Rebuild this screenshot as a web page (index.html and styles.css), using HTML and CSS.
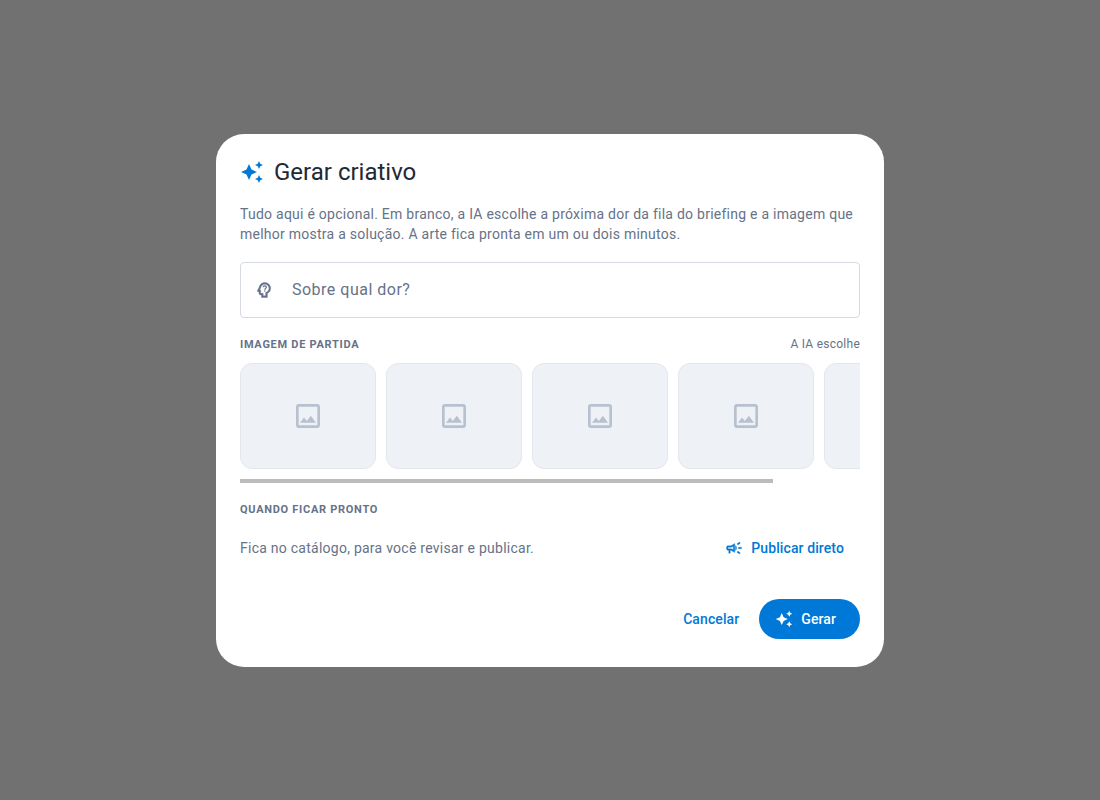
FILE: index.html
```
<!DOCTYPE html>
<html lang="pt-BR">
<head>
<meta charset="utf-8">
<meta name="viewport" content="width=device-width, initial-scale=1">
<title>Gerar criativo</title>
<link rel="stylesheet" href="styles.css">
</head>
<body>
<svg class="sprite" aria-hidden="true">
  <symbol id="sparkle" viewBox="0 0 24 24"><path d="M19 9l1.25-2.75L23 5l-2.75-1.25L19 1l-1.25 2.75L15 5l2.75 1.25zM11.5 9.5L9 4 6.5 9.5 1 12l5.5 2.5L9 20l2.5-5.5L17 12zM19 15l-1.25 2.75L15 19l2.75 1.25L19 23l1.25-2.75L23 19l-2.75-1.25z"/></symbol>
  <symbol id="image" viewBox="0 0 24 24"><path d="M19 5v14H5V5h14m0-2H5c-1.1 0-2 .9-2 2v14c0 1.1.9 2 2 2h14c1.1 0 2-.9 2-2V5c0-1.1-.9-2-2-2zm-4.86 8.86l-3 3.87L9 13.14 6 17h12z"/></symbol>
  <symbol id="mind" viewBox="0 0 24 24"><path d="M19.94 9.06c-.43-3.27-3.23-5.86-6.53-6.05C13.27 3 13.14 3 13 3 9.47 3 6.57 5.61 6.08 9l-1.93 3.48C3.74 13.14 4.22 14 5 14h1v2c0 1.1.9 2 2 2h1v3h7v-4.68c2.62-1.25 4.35-4.08 3.94-7.26zM14.89 14.63L14 15.05V19h-3v-3H8v-4H6.7l1.33-2.33C8.21 7.06 10.35 5 13 5c2.76 0 5 2.24 5 5 0 2.09-1.29 3.88-3.11 4.63z" stroke="currentColor" stroke-width=".5"/><path d="M11.1 8.6c.2-2.3 3.7-2.2 3.7 0 0 1.4-1.8 1.5-1.8 3" fill="none" stroke="currentColor" stroke-width="1.5"/><circle cx="13" cy="13.2" r=".9"/></symbol>
  <symbol id="campaign" viewBox="0 0 24 24"><path d="M18 11v2h4v-2zM16 17.61c.96.71 2.21 1.65 3.2 2.39.4-.53.8-1.07 1.2-1.6-.99-.74-2.24-1.68-3.2-2.4-.4.54-.8 1.08-1.2 1.61zM20.4 5.6c-.4-.53-.8-1.07-1.2-1.6-.99.74-2.24 1.68-3.2 2.4.4.53.8 1.07 1.2 1.6.96-.72 2.21-1.65 3.2-2.4zM4 9c-1.1 0-2 .9-2 2v2c0 1.1.9 2 2 2h1v4h2v-4h1l5 3V6L8 9zm5.03 1.71L11 9.53v4.94l-1.97-1.18-.55-.29H4v-2h4.48zM15.5 12c0-1.33-.58-2.53-1.5-3.35v6.69c.92-.81 1.5-2.01 1.5-3.34z" stroke="currentColor" stroke-width=".4"/></symbol>
</svg>
<main class="backdrop">
  <section class="dialog" role="dialog" aria-labelledby="dialog-title">
    <header class="dialog-header">
      <svg class="icon icon-title" aria-hidden="true"><use href="#sparkle"/></svg>
      <h1 class="title" id="dialog-title">Gerar criativo</h1>
    </header>
    <p class="intro">Tudo aqui é opcional. Em branco, a IA escolhe a próxima dor da fila do briefing e a imagem que melhor mostra a solução. A arte fica pronta em um ou dois minutos.</p>
    <label class="field">
      <svg class="icon icon-field" aria-hidden="true"><use href="#mind"/></svg>
      <input class="field-input" type="text" placeholder="Sobre qual dor?" aria-label="Sobre qual dor?">
    </label>
    <section class="group">
      <div class="group-head">
        <h2 class="label">IMAGEM DE PARTIDA</h2>
        <span class="hint">A IA escolhe</span>
      </div>
      <div class="picker">
        <div class="tiles">
          <button class="tile" type="button" aria-label="Imagem 1"><svg class="icon icon-tile"><use href="#image"/></svg></button>
          <button class="tile" type="button" aria-label="Imagem 2"><svg class="icon icon-tile"><use href="#image"/></svg></button>
          <button class="tile" type="button" aria-label="Imagem 3"><svg class="icon icon-tile"><use href="#image"/></svg></button>
          <button class="tile" type="button" aria-label="Imagem 4"><svg class="icon icon-tile"><use href="#image"/></svg></button>
          <button class="tile" type="button" aria-label="Imagem 5"><svg class="icon icon-tile"><use href="#image"/></svg></button>
        </div>
        <div class="track"><div class="thumb"></div></div>
      </div>
    </section>
    <section class="group">
      <div class="group-head">
        <h2 class="label">QUANDO FICAR PRONTO</h2>
      </div>
      <div class="publish">
        <p class="publish-text">Fica no catálogo, para você revisar e publicar.</p>
        <button class="button button-publish" type="button"><svg class="icon icon-button" aria-hidden="true"><use href="#campaign"/></svg>Publicar direto</button>
      </div>
    </section>
    <footer class="actions">
      <button class="button" type="button">Cancelar</button>
      <button class="button button-primary" type="button"><svg class="icon icon-button" aria-hidden="true"><use href="#sparkle"/></svg>Gerar</button>
    </footer>
  </section>
</main>
</body>
</html>
```
FILE: styles.css
```
:root {
  --blue: #0078d7;
  --ink: #1f2933;
  --muted: #667287;
}

* {
  box-sizing: border-box;
}

body {
  margin: 0;
  font-family: Roboto, "Liberation Sans", sans-serif;
  font-size: 14px;
  line-height: 20px;
  letter-spacing: 0.018em;
  color: var(--muted);
}

h1, h2, p {
  margin: 0;
}

button, input {
  font: inherit;
  letter-spacing: inherit;
}

.sprite {
  display: none;
}

.backdrop {
  display: grid;
  place-items: center;
  min-height: 100vh;
  padding: 24px;
  background: #717171;
}

.dialog {
  display: flex;
  flex-direction: column;
  gap: 18px;
  width: 100%;
  max-width: 668px;
  padding: 24px 24px 28px;
  border-radius: 28px;
  background: #fff;
}

.icon {
  display: block;
  flex: none;
  fill: currentColor;
}

.icon-title {
  width: 24px;
  height: 24px;
  color: var(--blue);
}

.icon-field {
  width: 20px;
  height: 20px;
}

.icon-tile {
  width: 32px;
  height: 32px;
}

.icon-button {
  width: 18px;
  height: 18px;
}

.dialog-header {
  display: flex;
  align-items: center;
  gap: 10px;
}

.title {
  font-size: 24px;
  font-weight: 400;
  line-height: 28px;
  letter-spacing: normal;
  color: var(--ink);
}

.field {
  display: flex;
  align-items: center;
  gap: 18px;
  height: 56px;
  padding: 0 13px;
  border: 1px solid #d5d9e1;
  border-radius: 4px;
}

.field-input {
  flex: 1;
  min-width: 0;
  padding: 0;
  border: 0;
  outline: 0;
  background: none;
  font-size: 16px;
  line-height: 24px;
  letter-spacing: 0.031em;
  color: var(--ink);
}

.field-input::placeholder {
  color: var(--muted);
  opacity: 1;
}

.group {
  display: flex;
  flex-direction: column;
  gap: 10px;
}

.group-head {
  display: flex;
  align-items: center;
  justify-content: space-between;
  line-height: 17px;
}

.label {
  font-size: 11px;
  font-weight: 700;
  letter-spacing: 0.065em;
}

.hint {
  font-size: 12px;
}

.picker {
  display: flex;
  flex-direction: column;
  gap: 10px;
}

.tiles {
  display: flex;
  gap: 10px;
  overflow-x: auto;
  scrollbar-width: none;
}

.tile {
  display: grid;
  place-items: center;
  flex: none;
  width: 136px;
  height: 106px;
  padding: 0;
  border: 1px solid #e3e7ec;
  border-radius: 12px;
  background: #eef1f6;
  color: #b8c1d0;
}

.thumb {
  width: 86%;
  height: 4px;
  background: #bcbcbc;
}

.publish {
  display: flex;
  align-items: center;
  justify-content: space-between;
}

.button {
  display: inline-flex;
  align-items: center;
  gap: 8px;
  height: 40px;
  padding: 0 12px;
  border: 0;
  border-radius: 20px;
  background: none;
  font-weight: 500;
  letter-spacing: 0.007em;
  color: var(--blue);
}

.button-publish {
  padding-right: 16px;
}

.button-primary {
  padding: 0 24px 0 16px;
  background: var(--blue);
  color: #fff;
}

.actions {
  display: flex;
  justify-content: flex-end;
  gap: 8px;
  padding-top: 13px;
}
```
